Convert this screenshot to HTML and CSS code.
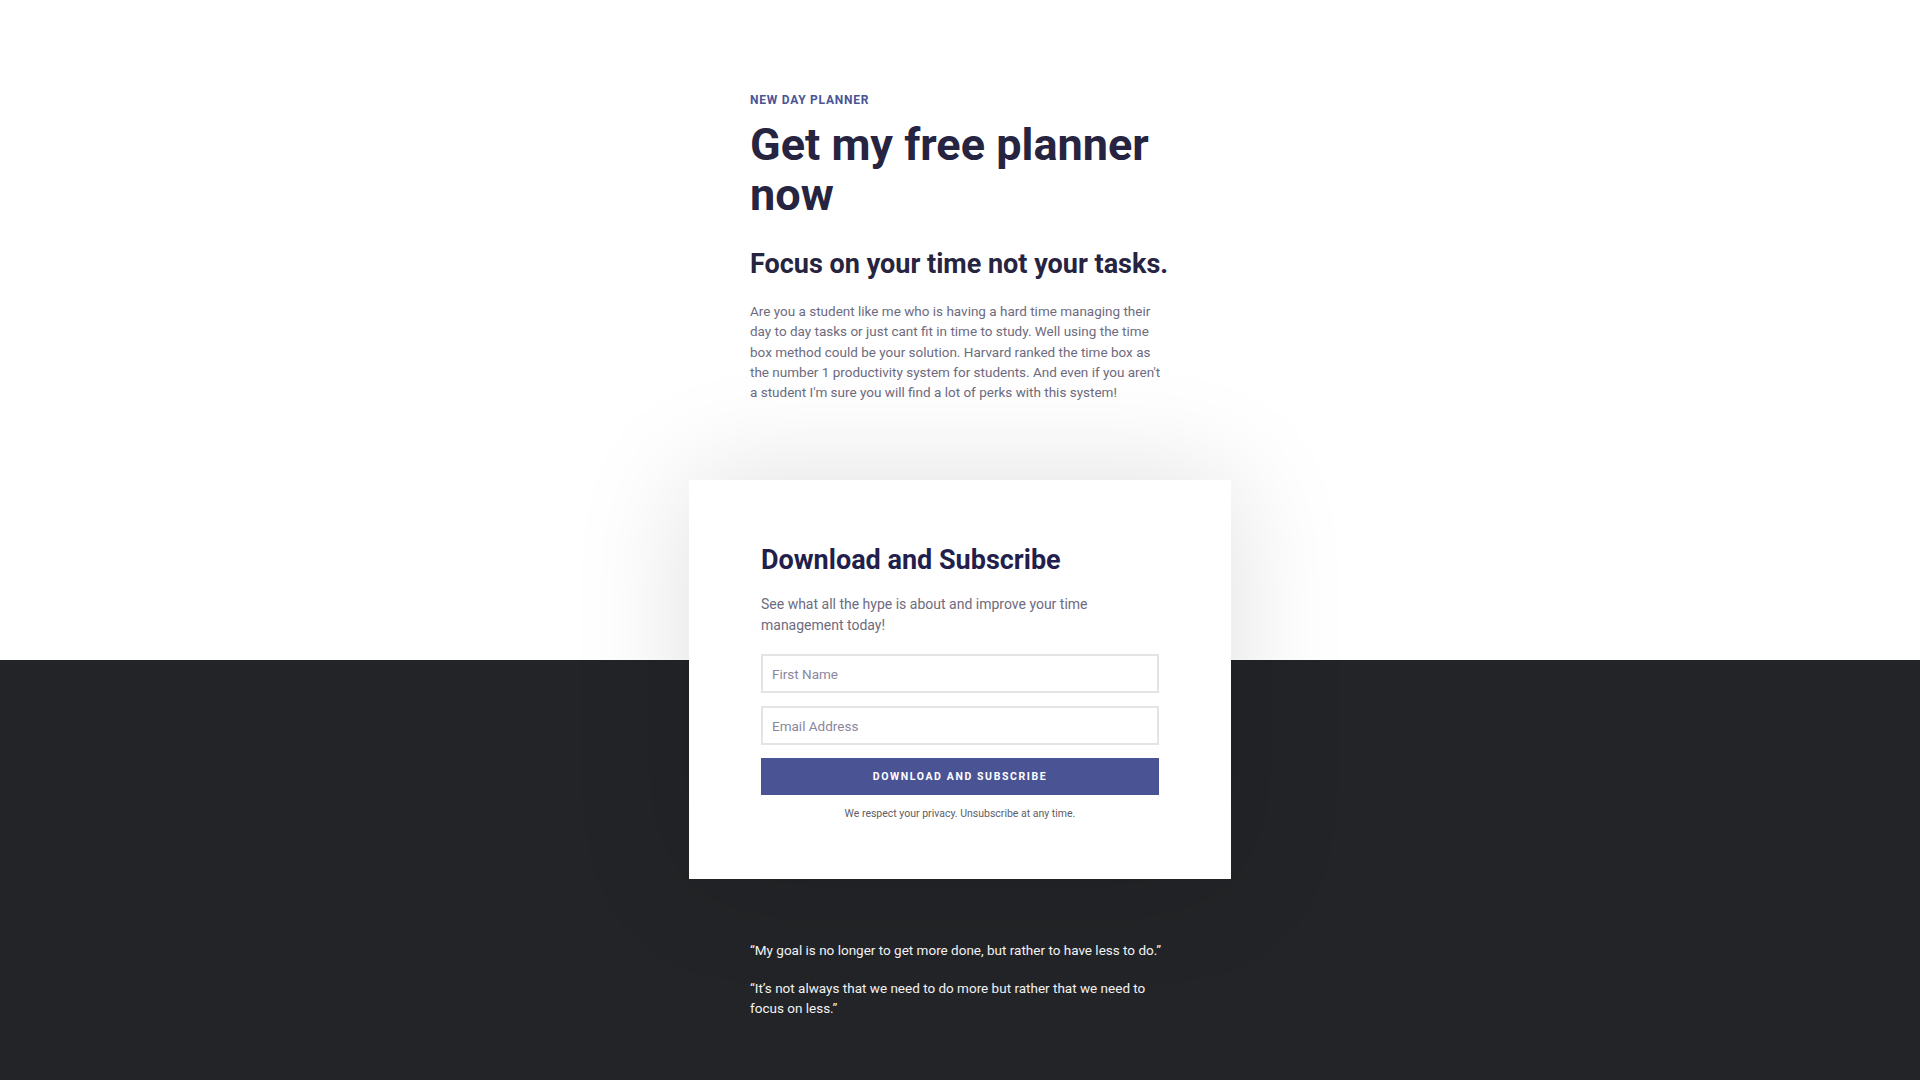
FILE: index.html
```html
<!DOCTYPE html>
<html lang="en">
<head>
<meta charset="utf-8">
<title>New Day Planner</title>
<link rel="stylesheet" href="styles.css">
</head>
<body>
<section class="hero">
  <div class="column">
    <div class="eyebrow">NEW DAY PLANNER</div>
    <h1 class="title">Get my free planner now</h1>
    <h2 class="subtitle">Focus on your time not your tasks.</h2>
    <p class="intro">Are you a student like me who is having a hard time managing their day to day tasks or just cant fit in time to study. Well using the time box method could be your solution. Harvard ranked the time box as the number 1 productivity system for students. And even if you aren't a student I'm sure you will find a lot of perks with this system!</p>
  </div>
</section>
<section class="signup">
  <div class="card">
    <h3 class="card-title">Download and Subscribe</h3>
    <p class="card-text">See what all the hype is about and improve your time management today!</p>
    <form class="form">
      <input class="field" type="text" placeholder="First Name">
      <input class="field" type="email" placeholder="Email Address">
      <button class="submit" type="button">DOWNLOAD AND SUBSCRIBE</button>
    </form>
    <p class="privacy">We respect your privacy. Unsubscribe at any time.</p>
  </div>
</section>
<section class="quotes">
  <div class="column">
    <p class="quote">“My goal is no longer to get more done, but rather to have less to do.”</p>
    <p class="quote">“It’s not always that we need to do more but rather that we need to focus on less.”</p>
  </div>
</section>
</body>
</html>
```

FILE: styles.css
```css
* { box-sizing: border-box; }
html, body {
  margin: 0;
  padding: 0;
}
body {
  font-family: Roboto, "Liberation Sans", Arial, sans-serif;
  background: #232427;
  min-height: 1080px;
}
.hero {
  background: #ffffff;
  padding-top: 92px;
}
.column {
  width: 420px;
  margin: 0 auto;
}
.eyebrow {
  font-size: 12px;
  line-height: 16px;
  font-weight: 700;
  letter-spacing: 0.75px;
  color: #4a5494;
  margin-bottom: 12px;
}
.title {
  margin: 0 0 27px;
  font-size: 45px;
  line-height: 50px;
  font-weight: 700;
  color: #262440;
}
.subtitle {
  margin: 0 0 20px;
  font-size: 27px;
  line-height: 34px;
  font-weight: 700;
  color: #262440;
}
.intro {
  margin: 0;
  font-size: 13.5px;
  line-height: 20.3px;
  color: #6e6b80;
}
.signup {
  padding-top: 78px;
  background: linear-gradient(#ffffff 0, #ffffff 258px, #232427 258px);
  display: flex;
  justify-content: center;
}
.card {
  width: 542px;
  background: #ffffff;
  padding: 63px 72px 57px;
  box-shadow: 0 0 110px rgba(0, 0, 0, 0.13);
}
.card-title {
  margin: 0 0 17px;
  font-size: 27px;
  line-height: 34px;
  font-weight: 700;
  color: #231f4c;
}
.card-text {
  margin: 0 0 18px;
  font-size: 14px;
  line-height: 21px;
  color: #6e6b80;
}
.form {
  display: flex;
  flex-direction: column;
  gap: 13px;
}
.field {
  height: 39px;
  border: 2px solid #e4e4e6;
  padding: 0 9px;
  font-family: inherit;
  font-size: 13.5px;
  color: #333;
  background: #fff;
  outline: none;
}
.field::placeholder { color: #8a879c; }
.submit {
  height: 37px;
  border: 0;
  background: #4a5494;
  color: #ffffff;
  font-family: inherit;
  font-size: 10.5px;
  font-weight: 700;
  letter-spacing: 1.6px;
  cursor: pointer;
}
.privacy {
  margin: 11px 0 0;
  font-size: 10.5px;
  line-height: 16px;
  color: #5e5d66;
  text-align: center;
}
.quotes {
  background: #232427;
  padding-top: 61px;
  padding-bottom: 60px;
}
.quote {
  margin: 0 0 17px;
  font-size: 13.5px;
  line-height: 20.5px;
  color: #f2f2f4;
}
```
